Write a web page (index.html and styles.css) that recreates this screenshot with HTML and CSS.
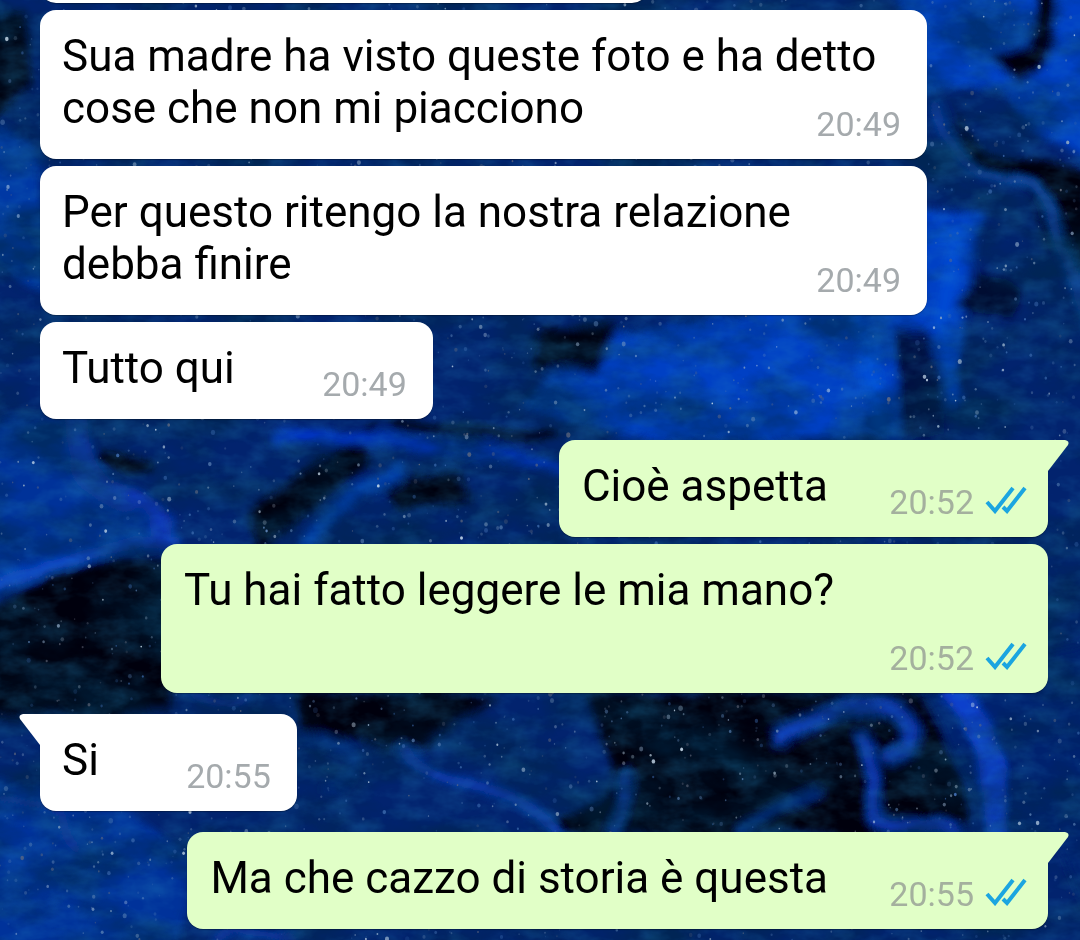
FILE: index.html
```html
<!DOCTYPE html>
<html lang="it">
  <head>
    <meta charset="UTF-8" />
    <meta name="viewport" content="width=device-width, initial-scale=1.0" />
    <title>Chat</title>
    <link rel="stylesheet" href="styles.css">
  </head>
  <body>
    <svg class="wallpaper" viewBox="0 0 1080 940" preserveAspectRatio="xMidYMid slice" aria-hidden="true">
      <defs>
        <filter id="swirl" x="-10%" y="-10%" width="120%" height="120%">
          <feGaussianBlur stdDeviation="4" result="soft" />
          <feTurbulence type="fractalNoise" baseFrequency="0.012" numOctaves="3" seed="8" result="noise" />
          <feDisplacementMap in="soft" in2="noise" scale="26" xChannelSelector="R" yChannelSelector="G" />
        </filter>
        <filter id="fog" x="0" y="0" width="100%" height="100%">
          <feTurbulence type="fractalNoise" baseFrequency="0.01 0.018" numOctaves="5" seed="21" />
          <feColorMatrix values="0 0 0 0 0  0 0 0 0 0.02  0 0 0 0 0.06  2.6 0 0 0 -0.95" />
        </filter>
        <filter id="grain" x="0" y="0" width="100%" height="100%">
          <feTurbulence type="fractalNoise" baseFrequency="0.03 0.05" numOctaves="4" seed="3" />
          <feColorMatrix values="0 0 0 0 0.02  0 0 0 0 0.26  0 0 0 0 0.55  0 1.8 0 0 -0.7" />
        </filter>
      </defs>
      <rect width="1080" height="940" fill="#02236e" />
      <g filter="url(#swirl)" fill="none" stroke-linecap="round">
        <!-- bright areas -->
        <g fill="#0341c4">
          <path d="M900 -20H1100V170L1040 140 1000 90 900 100Z" />
          <path d="M560 350Q740 300 890 310L910 440 620 440 520 400Z" />
          <path d="M-20 120Q20 130 40 160L50 300-20 250Z" fill="#0338a4" />
          <path d="M900 200L980 220 960 400 930 330 890 330Z" />
          <path d="M-20 780L120 800 190 860 180 960-20 960Z" fill="#02309a" />
          <path d="M920 690L1100 640V940L1060 850 980 800Z" fill="#02236e" />
          <path d="M60 420Q60 480 120 500 170 520 170 550L40 560-20 590-20 420Z" fill="#033099" />
        </g>
        <!-- black areas -->
        <g fill="#01040f">
          <path d="M-20 20L30 10 30 90-20 130Z" />
          <path d="M940 90Q960 150 1010 160L1090 170V280L1050 240Q1030 180 970 165Z" />
          <path d="M1040 -10L1060 0 1040 60 1015 80 990 50 1025 40Z" />
          <path d="M20 590Q70 555 170 565V710L-20 715-20 620Z" />
          <path d="M90 455Q130 445 155 468 120 485 90 455Z" />
          <path d="M250 510L380 420 360 470 260 550Z" />
          <path d="M370 485L460 470 470 500 400 510Z" />
          <path d="M540 325L620 330 600 370 530 360Z" />
          <path d="M300 695L500 695 420 750 310 740Z" />
          <path d="M590 695H920Q970 780 960 835H540L620 780Z" />
          <path d="M890 330L930 330 950 430 900 440Z" fill="#021042" />
          <path d="M980 270L1020 290 1010 320 960 310Z" fill="#020f33" />
        </g>
        <!-- flowing ribbons -->
        <g stroke="#0848c8">
          <path d="M935 110Q960 180 1010 182 1050 190 1070 260L1090 330" stroke-width="8" stroke="#0a46a8" />
          <path d="M-10 590Q40 555 110 550T170 545" stroke-width="12" />
          <path d="M75 420Q70 480 130 505" stroke-width="24" stroke="#073ba8" />
          <path d="M130 500Q170 510 160 545" stroke-width="18" stroke="#0736b8" />
          <path d="M280 440Q420 435 570 470" stroke-width="14" stroke="#0634c4" />
          <path d="M300 560Q330 500 400 470" stroke-width="14" stroke="#063cac" />
          <path d="M400 425Q480 440 550 432" stroke-width="9" stroke="#03060c" />
          <path d="M780 742Q850 690 900 715 930 740 890 760" stroke-width="12" stroke="#0a40c4" />
          <path d="M865 735Q880 755 868 790 862 825 900 825 930 822 955 840" stroke-width="9" stroke="#0a40c4" />
          <path d="M950 690Q990 730 990 770L1000 850" stroke-width="24" stroke="#0a40cc" />
          <path d="M405 750Q430 775 480 788T560 835" stroke-width="9" stroke="#0a40b8" />
          <path d="M630 775L610 835" stroke-width="12" stroke="#0a40b0" />
          <path d="M740 830L810 790" stroke-width="12" stroke="#052a84" />
          <path d="M190 695Q230 710 250 695" stroke-width="10" stroke="#082fa0" />
          <path d="M310 735Q380 760 330 790" stroke-width="12" stroke="#062b86" />
          <path d="M0 800L60 815 80 850" stroke-width="8" stroke="#0838a4" />
          <path d="M220 940Q250 920 290 940" stroke-width="8" stroke="#0838a4" />
          <path d="M900 240L960 235 945 330 955 400" stroke-width="14" stroke="#0648d4" />
          <path d="M860 320L880 430" stroke-width="16" stroke="#0650d8" />
        </g>
      </g>
      <rect width="1080" height="940" filter="url(#fog)" opacity="0.6" />
      <rect width="1080" height="940" filter="url(#grain)" opacity="0.3" />
      <g id="stars"></g>
    </svg>

    <main class="chat">
      <div class="bubble in scrolled"></div>
      <div class="bubble in full">
        <p class="text">Sua madre ha visto queste foto e ha detto<br>cose che non mi piacciono</p>
        <div class="meta"><time>20:49</time></div>
      </div>
      <div class="bubble in full">
        <p class="text">Per questo ritengo la nostra relazione debba finire</p>
        <div class="meta"><time>20:49</time></div>
      </div>
      <div class="bubble in">
        <p class="text">Tutto qui</p>
        <div class="meta"><time>20:49</time></div>
      </div>
      <div class="bubble out tail">
        <p class="text">Cioè aspetta</p>
        <div class="meta">
          <time>20:52</time>
          <svg class="ticks" viewBox="0 0 42 28"><path d="M2 16L10 25 28 2M18 21L22 25 40 2" /></svg>
        </div>
      </div>
      <div class="bubble out">
        <p class="text">Tu hai fatto leggere le mia mano?</p>
        <div class="meta">
          <time>20:52</time>
          <svg class="ticks" viewBox="0 0 42 28"><path d="M2 16L10 25 28 2M18 21L22 25 40 2" /></svg>
        </div>
      </div>
      <div class="bubble in tail">
        <p class="text">Si</p>
        <div class="meta"><time>20:55</time></div>
      </div>
      <div class="bubble out tail">
        <p class="text">Ma che cazzo di storia è questa</p>
        <div class="meta">
          <time>20:55</time>
          <svg class="ticks" viewBox="0 0 42 28"><path d="M2 16L10 25 28 2M18 21L22 25 40 2" /></svg>
        </div>
      </div>
    </main>

    <script>
      // scatter the stars, same sky on every load
      var seed = 7;
      function rnd() {
        seed = (seed * 16807) % 2147483647;
        return seed / 2147483647;
      }
      var colors = ["#5f86b8", "#8fa9c4", "#3f6db0", "#6b6f80", "#c9dcec"];
      var stars = "";
      for (var i = 0; i < 3200; i++) {
        var x = (rnd() * 1080).toFixed(1);
        var y = (rnd() * 940).toFixed(1);
        var r = (0.7 + rnd() * rnd() * 1.7).toFixed(1);
        var color = colors[Math.floor(rnd() * colors.length)];
        var alpha = (0.2 + rnd() * rnd() * 0.8).toFixed(2);
        stars += `<ellipse cx="${x}" cy="${y}" rx="${r}" ry="${r * 1.2}" fill="${color}" opacity="${alpha}" />`;
      }
      document.getElementById("stars").innerHTML = stars;
    </script>
  </body>
</html>
```
FILE: styles.css
```css
* {
  box-sizing: border-box;
}
body {
  margin: 0;
  min-height: 100vh;
  overflow: hidden;
  background: #021f6c;
  font-family: Roboto, sans-serif;
}
.wallpaper {
  position: fixed;
  top: 0;
  left: 0;
  width: 100%;
  height: 100%;
}
.chat {
  position: relative;
  display: flex;
  flex-direction: column;
  gap: 7px;
  padding: 0 32px 11px 40px;
}
.bubble {
  position: relative;
  display: grid;
  max-width: 88%;
  padding: 20px 26px 15px 22px;
  border-radius: 16px;
  box-shadow: 0 1px 1px rgba(0, 0, 0, 0.3);
}
.full {
  width: 88%;
}
.in {
  align-self: flex-start;
  background: #fff;
}
.out {
  align-self: flex-end;
  padding: 20px 21px 15px 23px;
  background: #e1ffc7;
}
/* last message of the part scrolled away above */
.scrolled {
  width: 608px;
  height: 97px;
  margin-top: -94px;
}
.text,
.meta {
  grid-area: 1 / 1;
}
.text {
  margin: 0;
  padding-bottom: 10px;
  font-size: 44px;
  line-height: 52px;
  color: #000;
}
/* keeps room for the time at the end of the last line */
.text::after {
  content: "";
  display: inline-block;
  width: 172px;
  height: 1px;
}
.out .text::after {
  width: 199px;
}
.meta {
  display: flex;
  align-items: flex-end;
  align-self: end;
  justify-self: end;
  gap: 11px;
  font-size: 34px;
  line-height: 39px;
  color: #a5aaad;
}
.out .meta {
  color: #a4b09e;
}
.ticks {
  width: 42px;
  height: 28px;
  margin-bottom: 8px;
  fill: none;
  stroke: #1ba5e0;
  stroke-width: 4;
}
.tail::before {
  content: "";
  position: absolute;
  top: 0;
  width: 21px;
  height: 31px;
  background: inherit;
}
.tail {
  margin-top: 14px;
}
.in.tail {
  border-top-left-radius: 0;
}
.in.tail::before {
  right: 100%;
  clip-path: path("M21 0H4Q-1 1 1 5L21 31Z");
}
.out.tail {
  border-top-right-radius: 0;
}
.out.tail::before {
  left: 100%;
  clip-path: path("M0 0H17Q22 1 20 5L0 31Z");
}
```
